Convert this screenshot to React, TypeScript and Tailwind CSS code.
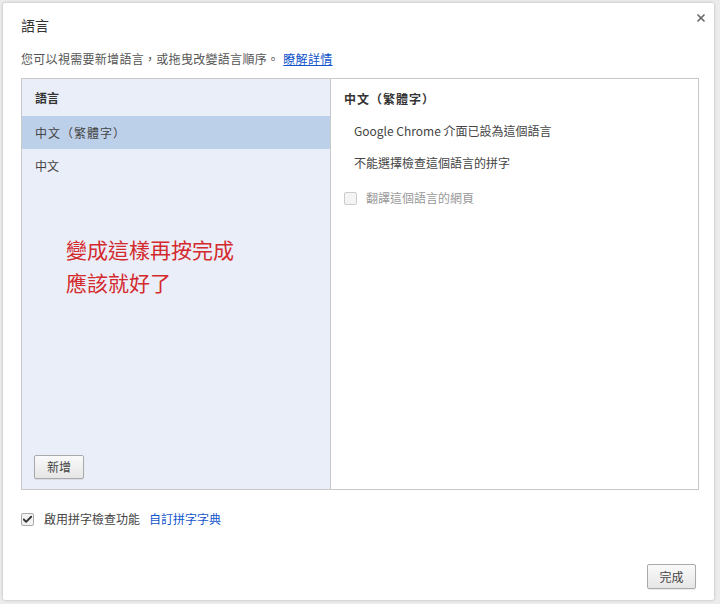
import { Check, X } from 'lucide-react';

const font = { fontFamily: '"Noto Sans CJK TC", "Liberation Sans", sans-serif' };

export default function App() {
  return (
    <div className="w-[720px] h-[604px] bg-[#ececec] pt-[3px] pl-[3px] overflow-hidden" style={font}>
      <div className="relative w-[711px] h-[597px] bg-white rounded-[2px] shadow-[0_0_3px_rgba(0,0,0,0.25)] flex flex-col px-[18px]">
        <button className="absolute right-[7px] top-[9px] text-[#6b6b6b]">
          <X size={12} strokeWidth={3.5} />
        </button>

        <h1 className="mt-[13px] h-[18px] text-[14px] leading-[18px] text-[#333]">語言</h1>

        <p className="mt-[17px] text-[12px] leading-[16px] text-[#555] tracking-[0.3px]">
          您可以視需要新增語言，或拖曳改變語言順序。
          <a className="ml-[4px] text-[#15c] underline">瞭解詳情</a>
        </p>

        {/* language list + details */}
        <div className="mt-[11px] flex h-[412px] w-[678px] border border-[#c8c8c8]">
          <div className="w-[309px] bg-[#eaeef8] border-r border-[#c8c8c8] flex flex-col">
            <div className="h-[37px] pl-[13px] flex items-center text-[12px] font-bold text-[#333]">語言</div>
            <div className="h-[33px] pl-[13px] flex items-center text-[12px] text-[#444] bg-[#bdd0ea] tracking-[1px]">中文（繁體字）</div>
            <div className="h-[33px] pl-[13px] flex items-center text-[12px] text-[#444]">中文</div>
            <div className="flex-1 pl-[44px] pt-[51px] text-[21px] leading-[33px] text-[#d42a2e]">
              <div>變成這樣再按完成</div>
              <div>應該就好了</div>
            </div>
            <div className="pl-[12px] pb-[10px]">
              <button className="h-[24px] px-[12px] text-[12px] text-[#444] border border-[#aaa] rounded-[2px] bg-gradient-to-b from-[#fafafa] to-[#e6e6e6] shadow-[0_1px_1px_rgba(0,0,0,0.08)]">
                新增
              </button>
            </div>
          </div>
          <div className="flex-1 flex flex-col pl-[13px] pt-[12px] text-[12px]">
            <div className="h-[16px] leading-[16px] font-bold text-[#333] tracking-[1px]">中文（繁體字）</div>
            <div className="mt-[16px] pl-[10px] leading-[16px] text-[#444]">Google Chrome 介面已設為這個語言</div>
            <div className="mt-[16px] pl-[10px] leading-[16px] text-[#444]">不能選擇檢查這個語言的拼字</div>
            <div className="mt-[18px] flex items-center gap-[9px] text-[#999]">
              <span className="w-[13px] h-[13px] border border-[#ccc] rounded-[2px] bg-[#f4f4f4]" />
              翻譯這個語言的網頁
            </div>
          </div>
        </div>

        <div className="mt-[20px] flex items-center text-[12px]">
          <span className="w-[13px] h-[13px] border border-[#aaa] rounded-[2px] bg-[#f2f2f2] flex items-center justify-center text-[#333]">
            <Check size={11} strokeWidth={4} />
          </span>
          <span className="ml-[10px] text-[#444]">啟用拼字檢查功能</span>
          <a className="ml-[9px] text-[#15c]">自訂拼字字典</a>
        </div>

        <div className="mt-auto mb-[11px] flex justify-end">
          <button className="h-[25px] w-[49px] text-[12px] text-[#444] border border-[#aaa] rounded-[2px] bg-gradient-to-b from-[#fafafa] to-[#e6e6e6] shadow-[0_1px_1px_rgba(0,0,0,0.08)]">
            完成
          </button>
        </div>
      </div>
    </div>
  );
}
